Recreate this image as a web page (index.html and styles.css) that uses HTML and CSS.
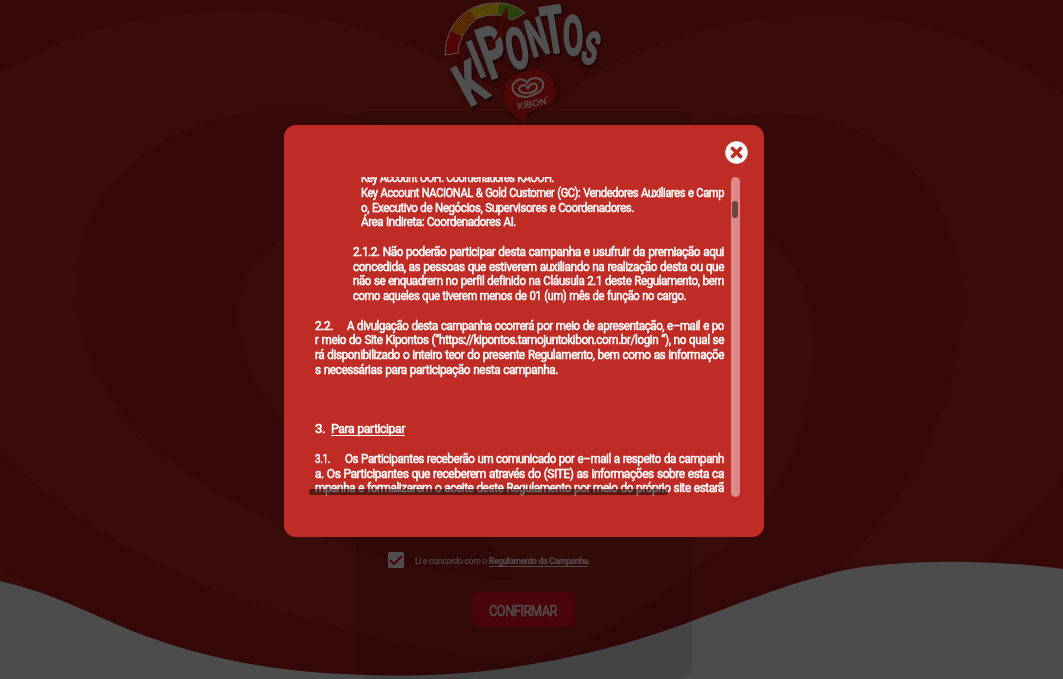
FILE: index.html
```
<!DOCTYPE html>
<html lang="pt-BR">
<head>
<meta charset="utf-8">
<title>Kipontos</title>
<link rel="stylesheet" href="styles.css">
</head>
<body>
<div class="page">
  <svg class="backdrop" viewBox="0 0 1063 679" aria-hidden="true">
    <rect class="dark" width="1063" height="679"/>
    <path class="brown" d="M0 73C70 30 150 11 245 11C350 11 455 58 540 115C610 50 710 15 830 15C920 15 1000 46 1063 95V478Q1027 523 985 562L840 568L690 575C640 612 580 646 520 660C460 656 410 645 360 633C310 621 265 608 220 592C135 559 60 510 0 452Z"/>
    <path class="brown" d="M0 567Q18 580 34 592L0 582Z"/>
    <path class="dark" d="M77 285C77 175 175 110 290 110C400 110 470 160 524 220C590 160 670 114 776 114C890 114 962 200 962 300C962 400 910 500 840 568L700 640L620 630Q665 600 690 575C770 500 813 430 813 346C813 270 766 220 700 205L520 330L513 580C470 580 410 570 360 548C200 505 77 420 77 285Z"/>
    <path class="brown" d="M290 235Q238 260 238 315Q238 370 286 427L500 520L524 560L740 535C790 480 813 420 813 346Q813 270 764 233L524 350Z"/>
    <path class="brown" d="M513 580Q520 574 505 560L480 530H741Q715 557 690 575C640 612 590 643 530 658Z"/>
    <path class="wave" d="M0 581C60 595 100 619 140 634C230 667 305 675.500 410 675.500C500 674 600 657 700 618C765 593 800 581 840 571C900 558 1000 560 1063 569V679H0Z"/>
  </svg>

  <main class="card">
    <div class="agree">
      <svg class="checkbox" viewBox="0 0 16 16"><rect width="16" height="16" rx="1.500"/><path d="M2 8L6 12L14 4"/></svg>
      <p class="agree-text" data-w="175">Li e concordo com o <a>Regulamento da Campanha</a>.</p>
    </div>
    <button class="confirm"><p data-w="68">CONFIRMAR</p></button>
  </main>

  <svg class="logo" viewBox="0 0 190 126" role="img" aria-label="Kipontos Kibon">
    <path fill="#520404" d="M15 55Q15 42 20 31L32 37Q28 45 28 53Z"/>
    <path fill="#5a2b02" d="M20 31Q27 17 39 10L46 19Q37 26 32 37Z"/>
    <path fill="#574702" d="M39 10Q52 2 70 3L68 15Q56 14 46 19Z"/>
    <path fill="#2b430b" d="M70 3Q85 4 95 13L82 20Q75 16 68 15Z"/>
    <path class="gauge" d="M15 55Q15 42 20 31Q27 17 39 10Q52 2 70 3Q85 4 95 13L82 20Q75 16 68 15Q56 14 46 19Q37 26 32 37Q28 45 28 53Z"/>
    <g class="letters">
      <text transform="translate(40 83) rotate(-29) scale(.66 1)" y="21" font-size="59">K</text>
      <text transform="translate(46 59) rotate(-22) scale(.62 1)" y="19" font-size="53">I</text>
      <text transform="translate(63 51) rotate(-20) scale(.56 1)" y="26" font-size="72">P</text>
      <text transform="translate(87 48) rotate(-12) scale(.56 1)" y="20.500" font-size="57">O</text>
      <text transform="translate(107 37) rotate(-16) scale(.54 1)" y="18.500" font-size="52">N</text>
      <text transform="translate(123 29) rotate(-9) scale(.56 1)" y="24" font-size="66">T</text>
      <text transform="translate(143 35) rotate(-2) scale(.54 1)" y="20" font-size="55">O</text>
      <text transform="translate(161 48) rotate(16) scale(.56 1)" y="16" font-size="45">S</text>
    </g>
    <path fill="#420707" d="M62 46L74 17L71 17L77 7L78 19L75 18L71 35Z"/>
    <path class="bubble" d="M73 94C73 79 88 72 105 69Q118 70 123 81Q130 94 124 101C117 109 98 108 96 117L96 124Q89 122 83 114Q73 105 73 94Z"/>
    <g class="heart">
      <path d="M97 97C82 97 80 87 85 82C89 78 95 79 97 83C101 76 111 77 113 83C115 91 103 96 97 97Z"/>
      <path d="M98 93C89 94 87 88 91 86C94 84 97 86 98 88C100 83 106 82 107 86C108 90 103 93 98 93Z"/>
    </g>
    <text class="brand" transform="translate(102.500 107) rotate(-11)">KIBON</text>
    <text class="reg" x="115" y="99">®</text>
  </svg>

  <section class="modal">
    <button class="close" aria-label="Fechar">
      <svg viewBox="0 0 24 24"><circle cx="12" cy="12" r="11.700"/><path d="M7.800 7.800L16.200 16.200M16.200 7.800L7.800 16.200"/></svg>
    </button>
    <div class="viewer">
      <div class="terms">
        <div class="block deep">
          <p data-w="193">Key Account OOH: Coordenadores KAOOH.</p>
          <p data-w="363">Key Account NACIONAL &amp; Gold Customer (GC): Vendedores Auxiliares e Camp</p>
          <p data-w="273">o, Executivo de Negócios, Supervisores e Coordenadores.</p>
          <p data-w="155">Área Indireta: Coordenadores AI.</p>
        </div>
        <div class="block mid">
          <p data-w="371">2.1.2. Não poderão participar desta campanha e usufruir da premiação aqui</p>
          <p data-w="371">concedida, as pessoas que estiverem auxiliando na realização desta ou que</p>
          <p data-w="371">não se enquadrem no perfil definido na Cláusula 2.1 deste Regulamento, bem</p>
          <p data-w="333">como aqueles que tiverem menos de 01 (um) mês de função no cargo.</p>
        </div>
        <div class="block">
          <div class="clause"><p data-w="18">2.2.</p><p data-w="377">A divulgação desta campanha ocorrerá por meio de apresentação, e–mail e po</p></div>
          <p data-w="409">r meio do Site Kipontos (“https://kipontos.tamojuntokibon.com.br/login “), no qual se</p>
          <p data-w="409">rá disponibilizado o inteiro teor do presente Regulamento, bem como as informaçõe</p>
          <p data-w="243">s necessárias para participação nesta campanha.</p>
        </div>
        <div class="block heading"><p data-w="10">3.</p><p class="under" data-w="74">Para participar</p></div>
        <div class="block">
          <div class="clause"><p data-w="15">3.1.</p><p data-w="379">Os Participantes receberão um comunicado por e–mail a respeito da campanh</p></div>
          <p data-w="409">a. Os Participantes que receberem através do (SITE) as informações sobre esta ca</p>
          <p data-w="409">mpanha e formalizarem o aceite deste Regulamento por meio do próprio site estarã</p>
        </div>
      </div>
      <div class="track"><div class="thumb"></div></div>
      <div class="hthumb"></div>
    </div>
  </section>
</div>
<script src="fit.js"></script>
</body>
</html>
```
FILE: styles.css
```
* { box-sizing: border-box; }
body { margin: 0; overflow: hidden; background: #360909; font-family: "Roboto", "Liberation Sans", sans-serif; }
button { border: 0; padding: 0; background: none; font: inherit; }
p { margin: 0; white-space: pre; transform-origin: 0 50%; }
.page { position: relative; width: 1063px; height: 679px; overflow: hidden; }
.backdrop { position: absolute; inset: 0; width: 1063px; height: 679px; }
.dark { fill: #360909; }
.brown { fill: #380c09; }
.wave { fill: #4c4c4c; }

.card { position: relative; width: 336px; height: 568px; margin: 111px 0 0 356px; padding: 441px 32px 0; border-radius: 14px; background: rgba(0, 0, 0, .1); display: flex; flex-direction: column; }
.agree { display: flex; align-items: center; gap: 11px; height: 16px; }
.checkbox { width: 16px; height: 16px; }
.checkbox rect { fill: #4f4d4d; }
.checkbox path { fill: none; stroke: #4b0308; stroke-width: 2; }
.agree-text { color: #544a4a; font-size: 9.500px; letter-spacing: -.4px; line-height: 14px; padding-top: 1px; -webkit-text-stroke: .2px #544a4a; }
.agree-text a { font-weight: 700; text-decoration: underline; text-underline-offset: 2px; }
.confirm { width: 103px; height: 35px; margin: 24px 0 0 84px; padding: 3px 0 0 17px; border-radius: 8px; background: #4a0308; color: #504b4b; font-size: 15.500px; letter-spacing: -.6px; display: flex; align-items: center; -webkit-text-stroke: .7px #504b4b; }

.logo { position: absolute; left: 430px; top: 0; width: 190px; height: 126px; overflow: visible; }
.gauge { fill: none; stroke: #5d5050; stroke-width: 1; }
.letters { fill: #505050; stroke: #505050; stroke-width: 2; stroke-linejoin: round; font-weight: 700; text-anchor: middle; filter: drop-shadow(1.500px 2px 1.500px #180303); }
.bubble { fill: #4b0807; filter: drop-shadow(1px 1px 1px #210404); }
.heart { fill: none; stroke: #5a4d4d; stroke-width: 2.200; }
.brand { fill: #5a4d4d; font: 700 9.200px "Lato", sans-serif; text-anchor: middle; }
.reg { fill: #5a4d4d; font: 4px "Lato", sans-serif; }

.modal { position: absolute; left: 284px; top: 125px; width: 480px; height: 412px; padding: 16px 16px 0 25px; border-radius: 12px; background: #bf2b25; display: flex; flex-direction: column; }
.close { align-self: flex-end; width: 23px; height: 23px; display: block; }
.close svg { display: block; width: 23px; height: 23px; }
.close circle { fill: #fff; }
.close path { stroke: #bf2b25; stroke-width: 3.800; stroke-linecap: round; }
.viewer { position: relative; display: flex; justify-content: space-between; width: 431px; height: 320px; margin-top: 13px; padding-left: 6px; overflow: hidden; }
.terms { width: 409px; margin-top: -5.700px; color: #fff; font-size: 13.300px; letter-spacing: -.5px; word-spacing: .6px; line-height: 14.670px; -webkit-text-stroke: .5px #fff; }
.block { margin-bottom: 15px; }
.deep { padding-left: 46px; }
.mid { padding-left: 38px; }
.clause { display: flex; justify-content: space-between; }
.heading { display: flex; gap: 6px; margin-top: 45px; }
.under { text-decoration: underline; text-underline-offset: 2px; }
.track { width: 9px; height: 320px; padding: 24px 2px 0 1px; border-radius: 5px; background: #dd8a86; }
.thumb { width: 6px; height: 17px; border-radius: 3px; background: #6d423f; }
.hthumb { position: absolute; left: 0; top: 312px; width: 359px; height: 6px; border-radius: 3px; background: rgba(28, 12, 10, .62); }
```
FILE: fit.js
```
// Condenses each line so that it fills its measured width.
document.querySelectorAll('[data-w]').forEach(el => {
  const width = Number(el.dataset.w);
  const range = document.createRange();
  range.selectNodeContents(el);
  const natural = range.getBoundingClientRect().width;
  el.style.width = width + 'px';
  el.style.flex = 'none';
  el.style.transform = 'scaleX(' + width / natural + ')';
});
```
